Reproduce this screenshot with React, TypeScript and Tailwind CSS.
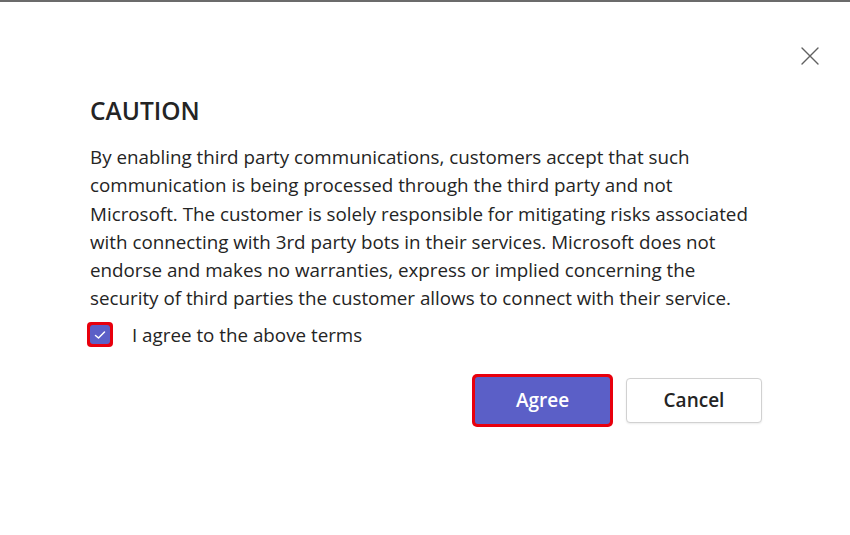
import React from 'react';

const lines = [
  'By enabling third party communications, customers accept that such',
  'communication is being processed through the third party and not',
  'Microsoft. The customer is solely responsible for mitigating risks associated',
  'with connecting with 3rd party bots in their services. Microsoft does not',
  'endorse and makes no warranties, express or implied concerning the',
  'security of third parties the customer allows to connect with their service.',
];

export default function App() {
  return (
    <div
      className="relative h-[535px] w-full overflow-hidden border-t-2 border-[#6b6b6b] bg-white text-[#242424]"
      style={{ fontFamily: '"Open Sans", "Noto Sans", sans-serif' }}
    >
      <button className="absolute right-[30px] top-[44px] flex h-[20px] w-[20px] items-center justify-center text-[#616161]">
        <svg width="20" height="20" viewBox="0 0 20 20" fill="none" stroke="currentColor" strokeWidth="1.4" strokeLinecap="round">
          <path d="M2 2 L18 18 M18 2 L2 18" />
        </svg>
      </button>

      <div className="pl-[90px] pr-[88px] pt-[93px]">
        <h1 className="text-[24.5px] font-semibold leading-[32px]">CAUTION</h1>

        <div className="mt-[16px] text-[18.8px] leading-[28.3px]">
          {lines.map((l) => (
            <div key={l} className="whitespace-nowrap">{l}</div>
          ))}
        </div>

        <label className="mt-[8px] flex items-center gap-[19px]">
          <span className="-ml-[3px] flex h-[25px] w-[26px] items-center justify-center rounded-[4px] bg-[#e8000d]">
            <span className="flex h-[19px] w-[20px] items-center justify-center rounded-[3px] bg-[#5b5fc7]">
              <svg width="12" height="10" viewBox="0 0 12 10" fill="none" stroke="white" strokeWidth="1.5" strokeLinecap="round" strokeLinejoin="round">
                <path d="M1.5 5.5 L4.5 8 L10.5 2" />
              </svg>
            </span>
          </span>
          <span className="text-[18.8px] leading-[28px]">I agree to the above terms</span>
        </label>

        <div className="mt-[25px] flex items-start justify-end gap-[13px]">
          <div className="rounded-[5px] bg-[#e8000d] p-[3px]">
            <button className="h-[47px] w-[135px] rounded-[3px] bg-[#5b5fc7] text-[19px] font-semibold text-white">
              Agree
            </button>
          </div>
          <button className="mt-[4px] h-[45px] w-[136px] rounded-[4px] border border-[#d1d1d1] bg-white text-[19px] font-semibold text-[#242424] shadow-[0_1px_2px_rgba(0,0,0,0.08)]">
            Cancel
          </button>
        </div>
      </div>
    </div>
  );
}
